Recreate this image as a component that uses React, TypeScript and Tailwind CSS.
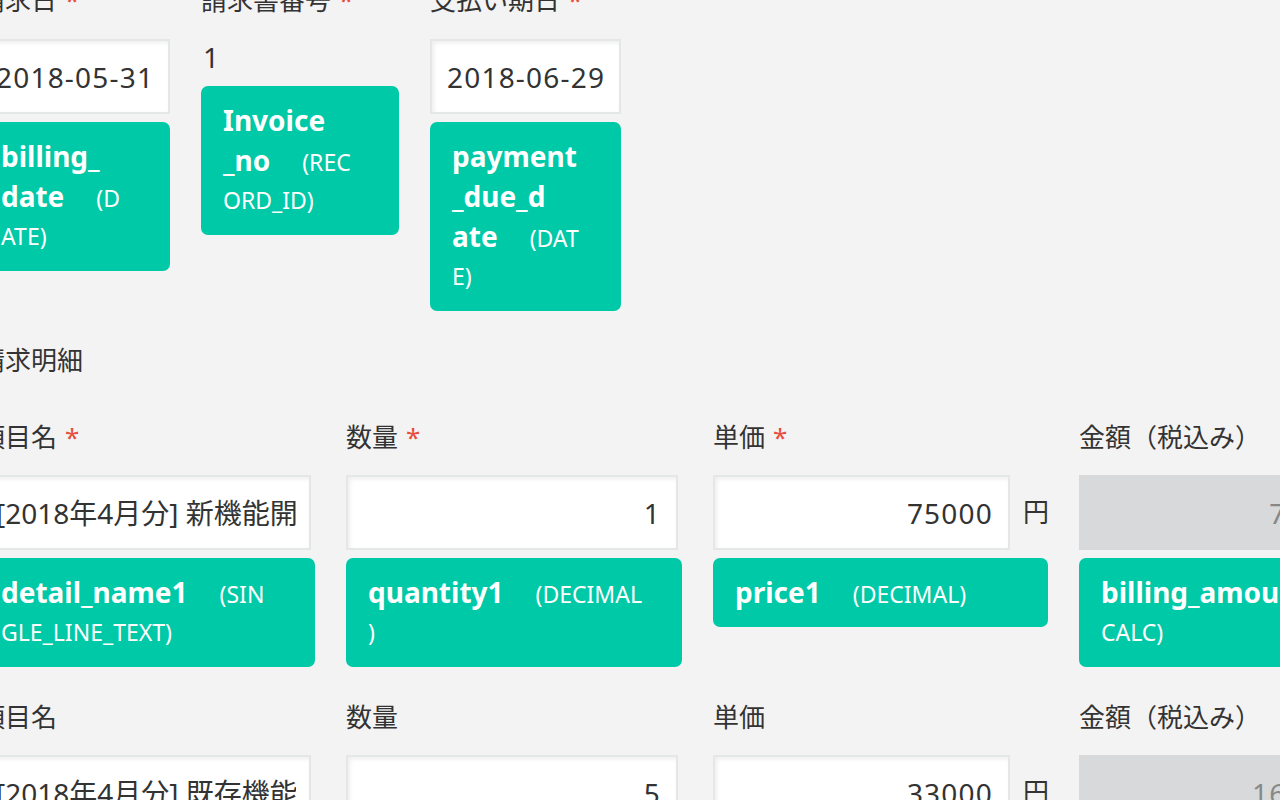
import React from 'react';

type CodeLine = { b?: string; s?: string };

const FONT = "font-['Noto_Sans','Noto_Sans_CJK_JP',sans-serif]";

const Label: React.FC<{ text: string; required?: boolean }> = ({ text, required }) => (
    <div className="h-[36px] leading-[36px] text-[26px] text-[#333] whitespace-nowrap">
        {text}
        {required && <span className="ml-[8px] text-[#e74c3c]">*</span>}
    </div>
);

const CodeBadge: React.FC<{ lines: CodeLine[]; width: string }> = ({ lines, width }) => (
    <div className={`${width} mt-[8px] rounded-[7px] bg-[#00c9a7] pl-[22px] pr-[16px] pt-[14px] pb-[15px] text-white`}>
        {lines.map((line, i) => (
            <div key={i} className="h-[40px] leading-[40px] whitespace-nowrap">
                {line.b && <span className="text-[28px] font-bold">{line.b}</span>}
                {line.s && <span className={`${line.b ? 'ml-[32px]' : ''} text-[23px]`}>{line.s}</span>}
            </div>
        ))}
    </div>
);

const TextBox: React.FC<{
    value: string;
    width: string;
    align?: 'left' | 'right';
    numeric?: boolean;
    disabled?: boolean;
}> = ({ value, width, align = 'left', numeric, disabled }) => (
    <div
        className={`${width} h-[75px] shrink-0 flex items-center border-2 pl-[15px] pr-[13px] text-[28px] ${
            disabled
                ? 'bg-[#d8d9db] border-[#d8d9db] text-[#888]'
                : 'bg-white border-[#e3e7e8] text-[#333] shadow-[inset_2px_2px_4px_rgba(0,0,0,0.07)]'
        }`}
    >
        <div
            className={`flex-1 overflow-hidden whitespace-nowrap ${align === 'right' ? 'text-right pr-[2px]' : ''} ${
                numeric ? 'tracking-[1.2px]' : ''
            }`}
        >
            {value}
        </div>
    </div>
);

const detailRows = [
    { name: '[2018年4月分] 新機能開発', qty: '1', price: '75000', amount: '75,000', required: true },
    { name: '[2018年4月分] 既存機能改修', qty: '5', price: '33000', amount: '165,000', required: false },
];

export default function App() {
    return (
        <div className={`w-[1280px] h-[800px] overflow-hidden bg-[#f3f3f3] ${FONT}`}>
            <div className="-ml-[21px] -mt-[18px] flex flex-col">
                {/* header fields */}
                <div className="flex items-start gap-[31px]">
                    <div className="w-[191px]">
                        <Label text="請求日" required />
                        <div className="mt-[21px]">
                            <TextBox value="2018-05-31" width="w-[191px]" numeric />
                        </div>
                        <CodeBadge
                            width="w-[191px]"
                            lines={[{ b: 'billing_' }, { b: 'date', s: '(D' }, { s: 'ATE)' }]}
                        />
                    </div>
                    <div className="w-[198px]">
                        <Label text="請求書番号" required />
                        <div className="mt-[21px] h-[39px] pl-[2px] leading-[36px] text-[28px] text-[#333]">1</div>
                        <CodeBadge
                            width="w-[198px]"
                            lines={[{ b: 'Invoice' }, { b: '_no', s: '(REC' }, { s: 'ORD_ID)' }]}
                        />
                    </div>
                    <div className="w-[191px]">
                        <Label text="支払い期日" required />
                        <div className="mt-[21px]">
                            <TextBox value="2018-06-29" width="w-[191px]" numeric />
                        </div>
                        <CodeBadge
                            width="w-[191px]"
                            lines={[{ b: 'payment' }, { b: '_due_d' }, { b: 'ate', s: '(DAT' }, { s: 'E)' }]}
                        />
                    </div>
                </div>

                {/* table title */}
                <div className="mt-[31px] h-[36px] leading-[36px] text-[26px] text-[#333]">請求明細</div>

                <div className="mt-[41px] flex flex-col gap-[32px]">
                    {detailRows.map((row, i) => (
                        <div key={i} className="flex items-start gap-[31px]">
                            <div className="w-[336px] shrink-0">
                                <Label text="項目名" required={row.required} />
                                <div className="mt-[20px]">
                                    <TextBox value={row.name} width="w-[332px]" />
                                </div>
                                {i === 0 && (
                                    <CodeBadge
                                        width="w-[336px]"
                                        lines={[{ b: 'detail_name1', s: '(SIN' }, { s: 'GLE_LINE_TEXT)' }]}
                                    />
                                )}
                            </div>
                            <div className="w-[336px] shrink-0">
                                <Label text="数量" required={row.required} />
                                <div className="mt-[20px]">
                                    <TextBox value={row.qty} width="w-[332px]" align="right" numeric />
                                </div>
                                {i === 0 && (
                                    <CodeBadge
                                        width="w-[336px]"
                                        lines={[{ b: 'quantity1', s: '(DECIMAL' }, { s: ')' }]}
                                    />
                                )}
                            </div>
                            <div className="w-[335px] shrink-0">
                                <Label text="単価" required={row.required} />
                                <div className="mt-[20px] flex items-center">
                                    <TextBox value={row.price} width="w-[297px]" align="right" numeric />
                                    <span className="ml-[13px] text-[26px] text-[#333]">円</span>
                                </div>
                                {i === 0 && (
                                    <CodeBadge width="w-[335px]" lines={[{ b: 'price1', s: '(DECIMAL)' }]} />
                                )}
                            </div>
                            <div className="w-[336px] shrink-0">
                                <Label text="金額（税込み）" />
                                <div className="mt-[20px]">
                                    <TextBox value={row.amount} width="w-[302px]" align="right" numeric disabled />
                                </div>
                                {i === 0 && (
                                    <CodeBadge
                                        width="w-[336px]"
                                        lines={[{ b: 'billing_amount1', s: '(' }, { s: 'CALC)' }]}
                                    />
                                )}
                            </div>
                        </div>
                    ))}
                </div>
            </div>
        </div>
    );
}
